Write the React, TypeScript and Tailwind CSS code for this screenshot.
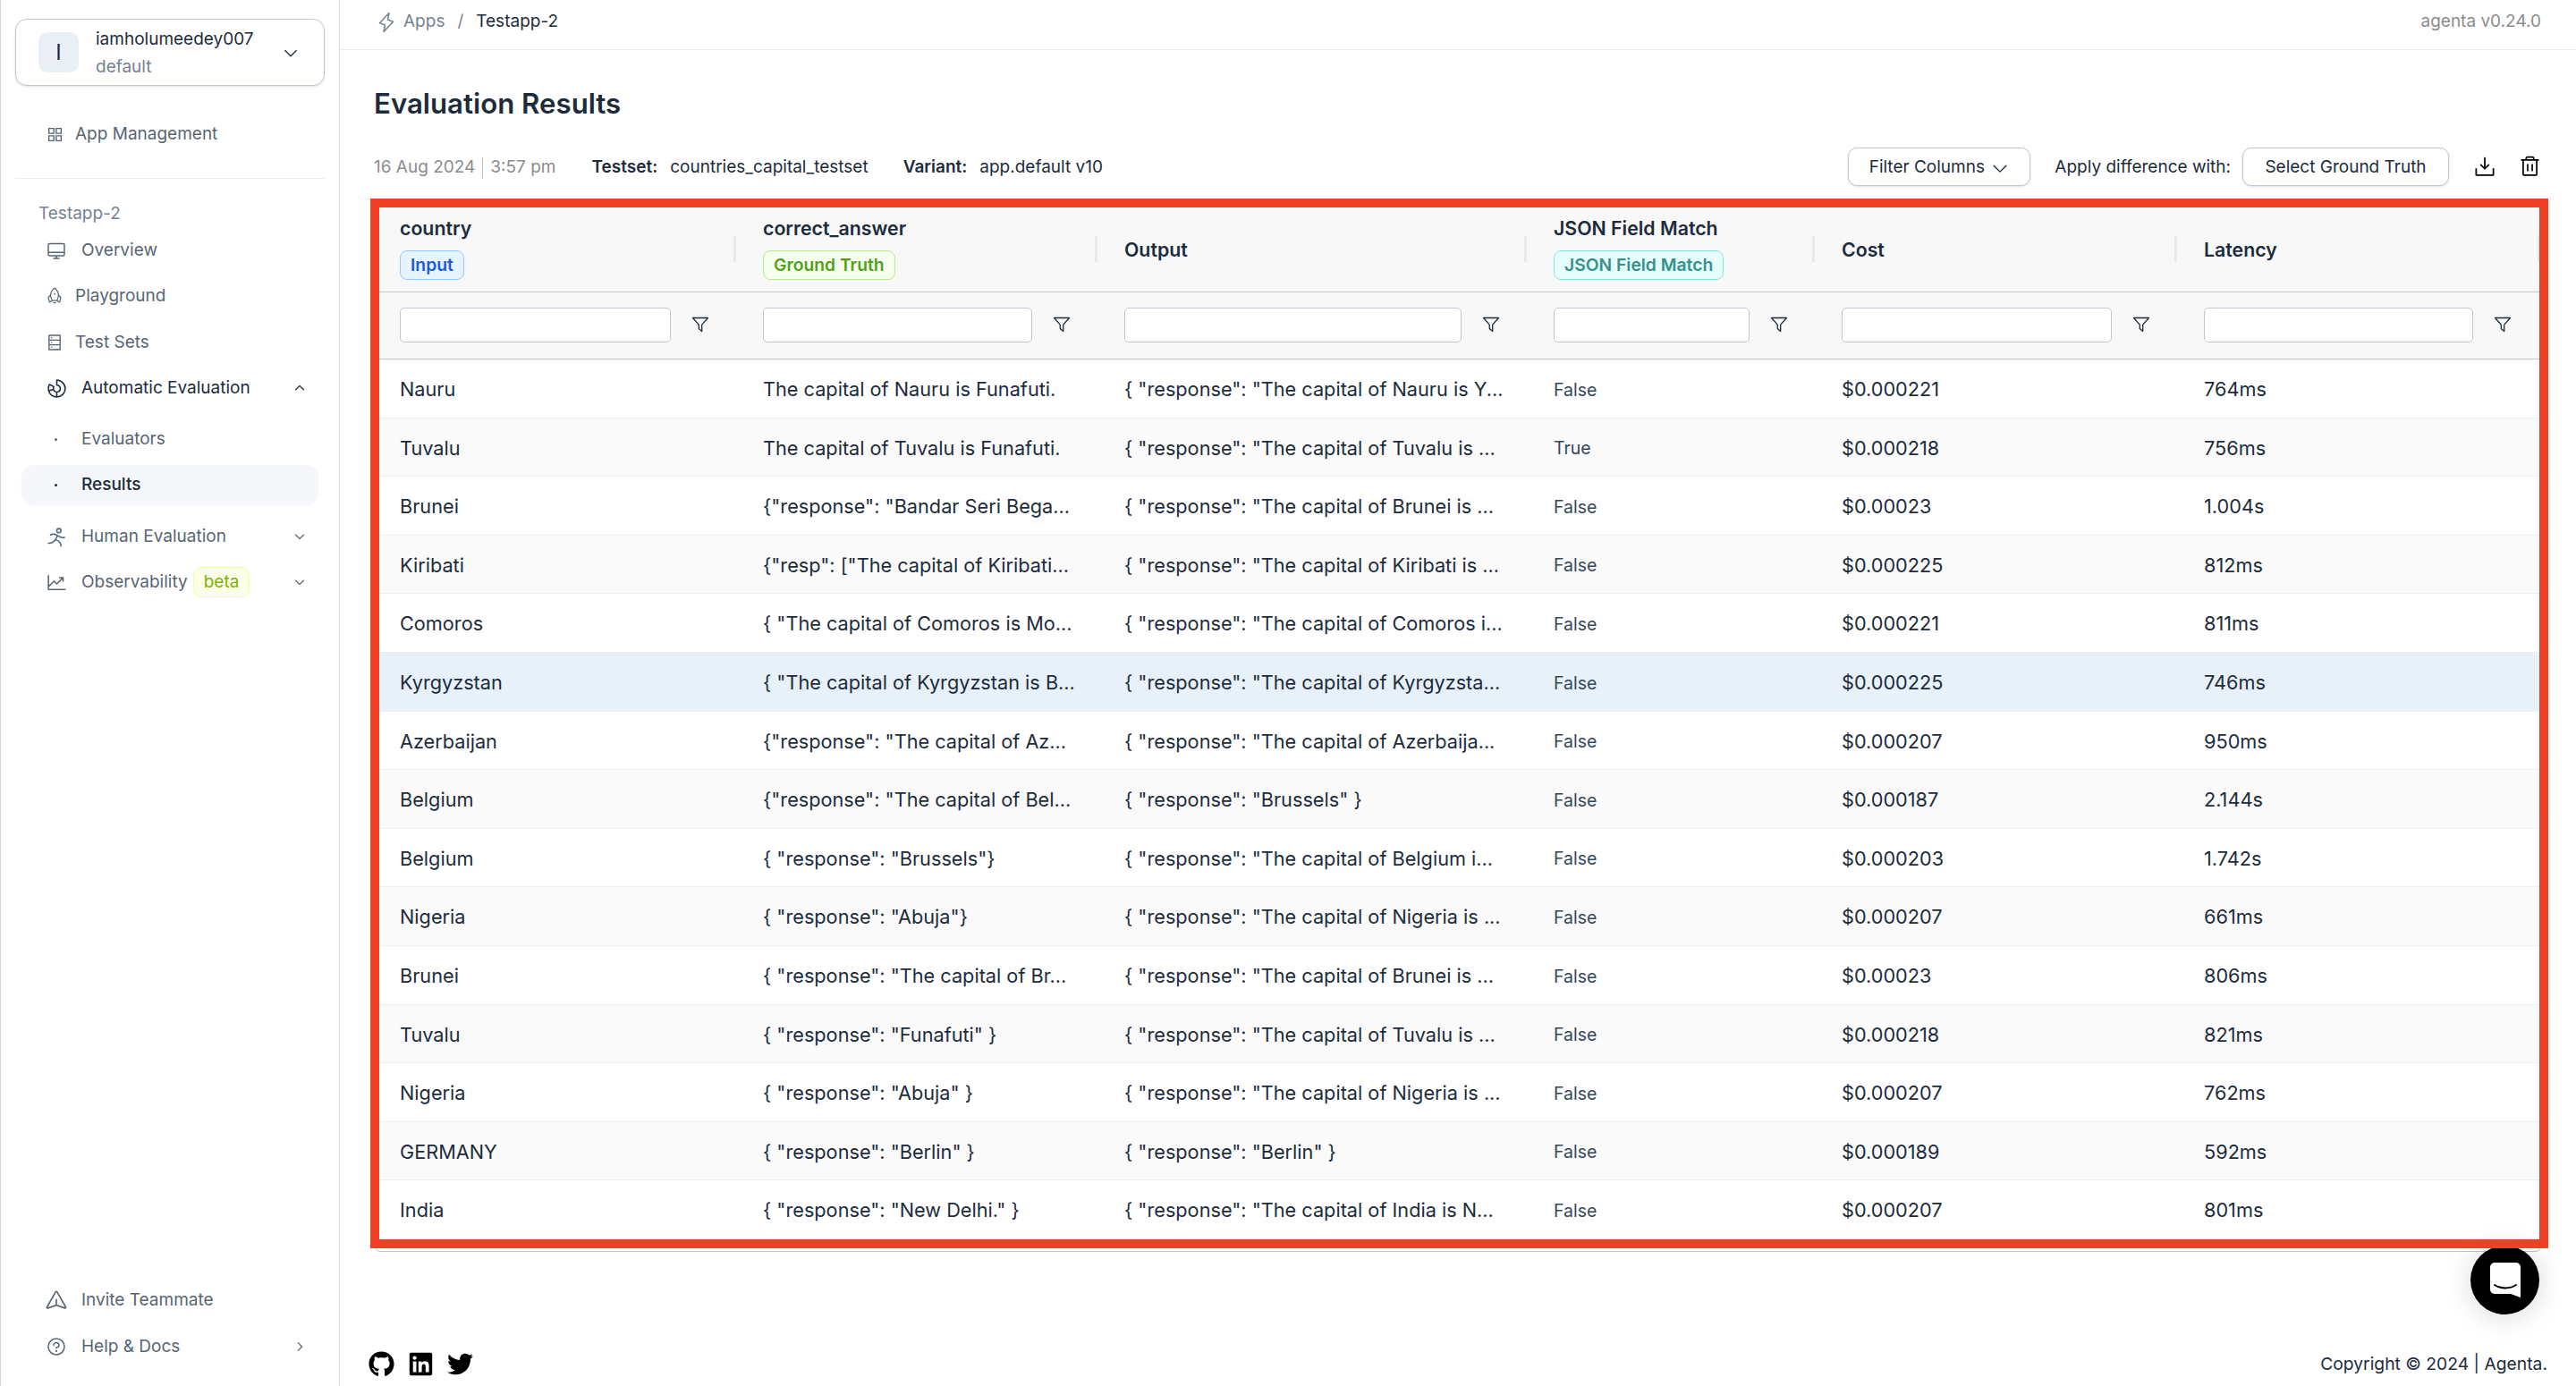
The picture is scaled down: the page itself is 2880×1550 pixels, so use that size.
import type { ReactNode } from "react";
import { AiOutlineAppstore, AiOutlineDatabase } from "react-icons/ai";
import { FaGithub, FaLinkedin, FaTwitter } from "react-icons/fa";
import {
	PiCaretDown,
	PiCaretDownBold,
	PiCaretRightBold,
	PiCaretUpBold,
	PiChartDonut,
	PiChartLineUp,
	PiDesktop,
	PiDownloadSimple,
	PiLightning,
	PiPaperPlane,
	PiPersonSimpleRun,
	PiQuestion,
	PiRocket,
	PiTrash,
} from "react-icons/pi";

type Row = {
	country: string;
	answer: string;
	output: string;
	match: string;
	cost: string;
	latency: string;
};

const rows: Row[] = [
	{ country: "Nauru", answer: "The capital of Nauru is Funafuti.", output: '{ "response": "The capital of Nauru is Y...', match: "False", cost: "$0.000221", latency: "764ms" },
	{ country: "Tuvalu", answer: "The capital of Tuvalu is Funafuti.", output: '{ "response": "The capital of Tuvalu is ...', match: "True", cost: "$0.000218", latency: "756ms" },
	{ country: "Brunei", answer: '{"response": "Bandar Seri Bega...', output: '{ "response": "The capital of Brunei is ...', match: "False", cost: "$0.00023", latency: "1.004s" },
	{ country: "Kiribati", answer: '{"resp": ["The capital of Kiribati...', output: '{ "response": "The capital of Kiribati is ...', match: "False", cost: "$0.000225", latency: "812ms" },
	{ country: "Comoros", answer: '{ "The capital of Comoros is Mo...', output: '{ "response": "The capital of Comoros i...', match: "False", cost: "$0.000221", latency: "811ms" },
	{ country: "Kyrgyzstan", answer: '{ "The capital of Kyrgyzstan is B...', output: '{ "response": "The capital of Kyrgyzsta...', match: "False", cost: "$0.000225", latency: "746ms" },
	{ country: "Azerbaijan", answer: '{"response": "The capital of Az...', output: '{ "response": "The capital of Azerbaija...', match: "False", cost: "$0.000207", latency: "950ms" },
	{ country: "Belgium", answer: '{"response": "The capital of Bel...', output: '{ "response": "Brussels" }', match: "False", cost: "$0.000187", latency: "2.144s" },
	{ country: "Belgium", answer: '{ "response": "Brussels"}', output: '{ "response": "The capital of Belgium i...', match: "False", cost: "$0.000203", latency: "1.742s" },
	{ country: "Nigeria", answer: '{ "response": "Abuja"}', output: '{ "response": "The capital of Nigeria is ...', match: "False", cost: "$0.000207", latency: "661ms" },
	{ country: "Brunei", answer: '{ "response": "The capital of Br...', output: '{ "response": "The capital of Brunei is ...', match: "False", cost: "$0.00023", latency: "806ms" },
	{ country: "Tuvalu", answer: '{ "response": "Funafuti" }', output: '{ "response": "The capital of Tuvalu is ...', match: "False", cost: "$0.000218", latency: "821ms" },
	{ country: "Nigeria", answer: '{ "response": "Abuja" }', output: '{ "response": "The capital of Nigeria is ...', match: "False", cost: "$0.000207", latency: "762ms" },
	{ country: "GERMANY", answer: '{ "response": "Berlin" }', output: '{ "response": "Berlin" }', match: "False", cost: "$0.000189", latency: "592ms" },
	{ country: "India", answer: '{ "response": "New Delhi." }', output: '{ "response": "The capital of India is N...', match: "False", cost: "$0.000207", latency: "801ms" },
];

const gridCols = "grid grid-cols-[410px_404px_480px_322px_405px_404px]";

type NavItemProps = {
	icon: ReactNode;
	label: ReactNode;
	wide?: boolean;
	className?: string;
	textClassName?: string;
	trailing?: ReactNode;
};

function NavItem({ icon, label, wide, className = "", textClassName = "text-[#586673]", trailing }: NavItemProps) {
	return (
		<div className={`flex items-center h-10 mx-[23px] pl-[27px] pr-[14px] text-[19px] ${textClassName} ${className}`}>
			<span className={`flex items-center shrink-0 ${wide ? "w-10" : "w-[33px]"}`}>{icon}</span>
			<span className="flex-1 flex items-center">{label}</span>
			{trailing}
		</div>
	);
}

function HeaderCell({ title, badge, first, last }: { title: string; badge?: ReactNode; first?: boolean; last?: boolean }) {
	return (
		<div className={`flex items-center justify-between ${first ? "pl-7" : "pl-6"} ${last ? "pr-1" : "pr-[6px]"}`}>
			<div className={`flex flex-col items-start ${badge ? "pb-[2px]" : "pt-[2px]"}`}>
				<span className="text-[21.3px] font-semibold text-[#1c2c3d] leading-7">{title}</span>
				{badge && <div className="mt-[11px]">{badge}</div>}
			</div>
			<span className="w-[3px] h-[29px] bg-[#e6eaf0]" />
		</div>
	);
}

function Badge({ children, className }: { children: ReactNode; className: string }) {
	return (
		<span className={`flex items-center h-[33px] px-[11px] rounded-lg border text-[19.3px] font-semibold ${className}`}>
			{children}
		</span>
	);
}

function FilterIcon() {
	return (
		<svg width="20" height="18" viewBox="0 0 20 18" fill="none" stroke="#1c2c3d" strokeWidth="1.3" strokeLinejoin="round" className="shrink-0">
			<path d="M1.5 1.5h17l-6.8 7.6v7.4l-3.4-3V9.1z" />
		</svg>
	);
}

function FilterCell({ first }: { first?: boolean }) {
	return (
		<div className={`flex items-center gap-[23px] pb-[2px] ${first ? "pl-7" : "pl-6"} pr-9`}>
			<input className="flex-1 min-w-0 h-[39px] rounded-[5px] border border-[#bdc7d1] bg-white" />
			<FilterIcon />
		</div>
	);
}

function Cell({ children, first, className = "text-[21.7px] pt-[2px]" }: { children: ReactNode; first?: boolean; className?: string }) {
	return (
		<div className={`flex items-center whitespace-nowrap overflow-hidden ${first ? "pl-7" : "pl-6"} ${className}`}>
			{children}
		</div>
	);
}

export default function App() {
	return (
		<div className="flex w-[2880px] h-[1550px] overflow-hidden bg-white text-[#1c2c3d] font-[family-name:Inter,sans-serif]">
			<aside className="w-[380px] shrink-0 flex flex-col border-l border-l-[#d4d4d4] border-r border-r-[#dcdcdc] bg-white">
				<div className="mx-4 mt-[21px] h-[75px] flex items-center pl-[25px] pr-[27px] rounded-[13px] border border-[#bdc7d1] shadow-sm">
					<div className="w-[45px] h-[45px] rounded-[10px] bg-[#eaeff5] flex items-center justify-center text-[24px] shrink-0">I</div>
					<div className="ml-[19px] flex-1 flex flex-col">
						<span className="text-[19px] leading-[31px]">iamholumeedey007</span>
						<span className="text-[19px] leading-[31px] text-[#758391]">default</span>
					</div>
					<PiCaretDown className="text-[20px]" />
				</div>

				<NavItem className="mt-[34px]" icon={<AiOutlineAppstore className="text-[21px]" />} label="App Management" />
				<div className="mx-4 mt-[29px] border-t border-[#ededed]" />
				<div className="ml-[42px] mt-[29px] h-5 flex items-center text-[19px] text-[#758391]">Testapp-2</div>

				<NavItem wide className="mt-[11px]" icon={<PiDesktop className="text-[24px]" />} label="Overview" />
				<NavItem className="mt-[11px]" icon={<PiRocket className="text-[20px]" />} label="Playground" />
				<NavItem className="mt-3" icon={<AiOutlineDatabase className="text-[20px]" />} label="Test Sets" />
				<NavItem
					wide
					className="mt-[11px]"
					textClassName="text-[#1c2c3d]"
					icon={<PiChartDonut className="text-[25px]" />}
					label="Automatic Evaluation"
					trailing={<PiCaretUpBold className="text-[14px]" />}
				/>
				<NavItem wide className="mt-[17px]" icon={<span className="ml-[10px] w-[3px] h-[3px] rounded-full bg-[#586673]" />} label="Evaluators" />
				<div className="mx-[23px] mt-[9px] h-[45px] rounded-[14px] bg-[#f5f7fa] flex items-center pl-[27px] text-[19px] font-medium">
					<span className="w-10 flex items-center">
						<span className="ml-[10px] w-[3px] h-[3px] rounded-full bg-[#1c2c3d]" />
					</span>
					Results
				</div>
				<NavItem
					wide
					className="mt-[15px]"
					icon={<PiPersonSimpleRun className="text-[25px]" />}
					label="Human Evaluation"
					trailing={<PiCaretDownBold className="text-[14px]" />}
				/>
				<NavItem
					wide
					className="mt-[11px]"
					icon={<PiChartLineUp className="text-[25px]" />}
					label={
						<>
							Observability
							<span className="ml-[6px] h-[34px] px-[11px] flex items-center rounded-[9px] border border-[#eaffa7] bg-[#fcffe6] text-[#7cb305]">beta</span>
						</>
					}
					trailing={<PiCaretDownBold className="text-[14px]" />}
				/>

				<div className="mt-auto pb-6 flex flex-col">
					<NavItem wide icon={<PiPaperPlane className="text-[26px] -ml-[1px]" />} label="Invite Teammate" />
					<NavItem
						wide
						className="mt-3"
						icon={<PiQuestion className="text-[24px]" />}
						label="Help & Docs"
						trailing={<PiCaretRightBold className="text-[14px]" />}
					/>
				</div>
			</aside>

			<main className="flex-1 min-w-0 flex flex-col">
				<header className="h-[56px] shrink-0 flex items-center justify-between pb-[6px] pl-[40px] pr-[39px] border-b border-[#ececec] text-[19px]">
					<div className="flex items-center">
						<PiLightning className="text-[24px] text-[#758391]" />
						<span className="ml-[7px] text-[#758391]">Apps</span>
						<span className="ml-[14px] text-[#758391]">/</span>
						<span className="ml-[14px]">Testapp-2</span>
					</div>
					<span className="text-[#8c8c8c]">agenta v0.24.0</span>
				</header>

				<div className="flex-1 flex flex-col px-[38px]">
					<h1 className="mt-10 h-10 flex items-center text-[31.2px] font-semibold">Evaluation Results</h1>

					<div className="mt-[29px] h-[43px] flex items-center text-[19px]">
						<span className="text-[#8c8c8c] flex items-center pt-[2px]">
							16 Aug 2024
							<span className="mx-[8px] w-px h-[24px] bg-[#c0c0c0]" />
							3:57 pm
						</span>
						<span className="ml-[40px] pt-[2px] font-semibold">Testset:</span>
						<span className="ml-[14px] pt-[2px]">countries_capital_testset</span>
						<span className="ml-[39px] pt-[2px] font-semibold">Variant:</span>
						<span className="ml-[14px] pt-[2px]">app.default v10</span>

						<div className="ml-auto flex items-center h-full">
							<button className="h-full w-[204px] pt-[2px] flex items-center justify-center gap-[6px] rounded-[10px] border border-[#bdc7d1] shadow-sm">
								Filter Columns
								<PiCaretDown className="text-[22px]" />
							</button>
							<span className="ml-[27px] pt-[2px]">Apply difference with:</span>
							<button className="ml-[13px] h-full w-[231px] pt-[2px] rounded-[10px] border border-[#bdc7d1] shadow-sm">Select Ground Truth</button>
							<PiDownloadSimple className="ml-[26px] text-[28px] text-black" />
							<PiTrash className="ml-[23px] text-[27px] text-black" />
						</div>
					</div>

					<div className="relative mt-[21px] h-[1171px] rounded-lg border border-[#bdc7d1] overflow-visible">
						<div className={`${gridCols} h-[97px] bg-[#f8f8f8] border-b border-[#bdc7d1] rounded-t-lg`}>
							<HeaderCell first title="country" badge={<Badge className="border-[#91caff] bg-[#e6f4ff] text-[#1d5bd6]">Input</Badge>} />
							<HeaderCell title="correct_answer" badge={<Badge className="border-[#b7eb8f] bg-[#f6ffed] text-[#52a01c]">Ground Truth</Badge>} />
							<HeaderCell title="Output" />
							<HeaderCell title="JSON Field Match" badge={<Badge className="border-[#87e8de] bg-[#e6fffb] text-[#36908f]">JSON Field Match</Badge>} />
							<HeaderCell title="Cost" />
							<HeaderCell last title="Latency" />
						</div>

						<div className={`${gridCols} h-[75px] bg-[#f8f8f8] border-b border-[#bdc7d1]`}>
							<FilterCell first />
							<FilterCell />
							<FilterCell />
							<FilterCell />
							<FilterCell />
							<FilterCell />
						</div>

						{rows.map((row, i) => (
							<div
								key={`${row.country}-${i}`}
								className={`${gridCols} h-[65.6px] border-b border-[#f0f0f0] ${i === 5 ? "bg-[#e8f0f9]" : i % 2 === 1 ? "bg-[#fafafa]" : "bg-white"}`}
							>
								<Cell first>{row.country}</Cell>
								<Cell>{row.answer}</Cell>
								<Cell>{row.output}</Cell>
								<Cell className="text-[19.5px] pt-1 text-[#33475b]">{row.match}</Cell>
								<Cell>{row.cost}</Cell>
								<Cell>{row.latency}</Cell>
							</div>
						))}

						<button className="absolute right-[2px] top-[1163px] z-10 w-[77px] h-[77px] rounded-full bg-black flex items-center justify-center shadow-[0_2px_32px_rgba(0,0,0,0.16)]">
							<svg width="34" height="40" viewBox="0 0 34 40">
								<path d="M5 0h24a5 5 0 0 1 5 5v34l-11-4H5a5 5 0 0 1-5-5V5a5 5 0 0 1 5-5z" fill="#fff" />
								<path d="M5 25c7 4.5 17 4.5 24 0" fill="none" stroke="#000" strokeWidth="2" strokeLinecap="round" />
							</svg>
						</button>
						<div className="absolute -left-[5px] -top-2 -right-2 bottom-[3px] z-20 border-10 border-[#ee4024] pointer-events-none" />
					</div>

					<footer className="mt-auto -mx-[6px] h-[50px] flex items-center justify-between text-[19.3px]">
						<div className="flex items-center gap-[15px] text-black text-[29px]">
							<FaGithub />
							<FaLinkedin />
							<FaTwitter />
						</div>
						<span>Copyright © 2024 | Agenta.</span>
					</footer>
				</div>
			</main>
		</div>
	);
}
